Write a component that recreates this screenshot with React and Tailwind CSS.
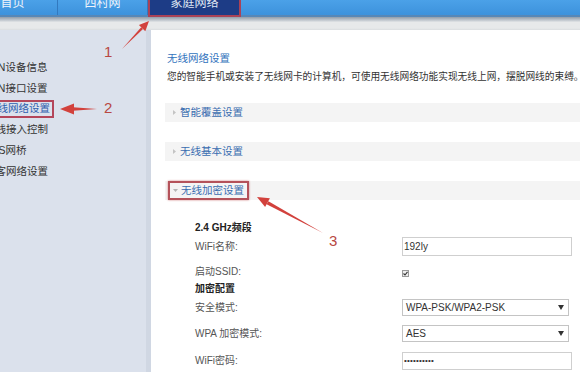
import React from 'react';

const font = { fontFamily: '"Liberation Sans", "Noto Sans CJK SC", sans-serif' };

const menu = [
    { text: 'LAN设备信息', shift: '-ml-[15px]' },
    { text: 'LAN接口设置', shift: '-ml-[15px]' },
    { text: '无线网络设置', active: true },
    { text: '无线接入控制', shift: '-ml-[15px]' },
    { text: 'WDS网桥', shift: '-ml-[19px]' },
    { text: '访客网络设置', shift: '-ml-[15px]' },
];

function Triangle({ open }) {
    return (
        <svg width="5" height="5" viewBox="0 0 5 5" className="shrink-0">
            {open ? <path d="M0 1 L5 1 L2.5 4 Z" fill="#b5b5b5" /> : <path d="M1 0 L4 2.5 L1 5 Z" fill="#c4c4c4" />}
        </svg>
    );
}

function SectionBar({ title, open, marked }) {
    return (
        <div className="h-[19px] bg-[#f4f4f4] flex items-center">
            <div
                className={
                    marked
                        ? 'ml-[3px] h-[19px] flex items-center gap-[3px] pl-[3px] pr-[3px] border-2 border-[#b4525a] shadow-[0_0_2px_#d08080]'
                        : 'ml-[7px] flex items-center gap-[3px]'
                }
            >
                <Triangle open={open} />
                <span className="text-[10.5px] leading-none text-[#3a6db0] whitespace-nowrap">{title}</span>
            </div>
        </div>
    );
}

function SelectBox({ value }) {
    return (
        <div className="w-[167px] h-[17px] border border-[#c4c4c4] bg-white flex items-center justify-between pl-[3px] pr-[4px]">
            <span className="text-[10px] leading-none text-[#333]">{value}</span>
            <svg width="6" height="5" viewBox="0 0 6 5">
                <path d="M0 0 L6 0 L3 5 Z" fill="#333" />
            </svg>
        </div>
    );
}

function Row({ label, children, className }) {
    return (
        <div className={'flex items-center ' + className}>
            <div className="w-[207px] text-[10px] leading-none text-[#555] whitespace-nowrap">{label}</div>
            {children}
        </div>
    );
}

export default function App() {
    return (
        <div className="w-[580px] h-[372px] overflow-hidden relative bg-white" style={font}>
            {/* top nav */}
            <div className="h-[17px] bg-[linear-gradient(to_bottom,#4ba1e8,#3d92dc)] border-b-2 border-[#5787b6] flex -ml-[32px]">
                <div className="w-[90px] h-[15px] border-r border-[#3279bf] flex justify-center overflow-hidden">
                    <span className="-mt-[4px] text-[12px] leading-[14px] text-[#eef4fb]">首页</span>
                </div>
                <div className="w-[90px] h-[15px] border-r border-[#3279bf] flex justify-center overflow-hidden">
                    <span className="-mt-[4px] text-[12px] leading-[14px] text-[#eef4fb]">四村网</span>
                </div>
                <div className="w-[93px] h-[17px] bg-[#1d3c86] border-2 border-t-0 border-[#a94257] flex justify-center overflow-hidden">
                    <span className="-mt-[4px] text-[12px] leading-[14px] text-[#dfe6f3]">家庭网络</span>
                </div>
            </div>
            <div className="h-[13px] bg-[linear-gradient(to_bottom,#919daa,#cdd2d7_30%,#e7e9ea_40%,#e7e9ea_85%,#dadddf)]" />

            <div className="flex h-[342px]">
                {/* sidebar */}
                <div className="w-[151px] shrink-0 bg-[#dbe1ec] border-r-[5px] border-[#d0d7e3] overflow-hidden pt-[27px]">
                    {menu.map((m) => (
                        <div key={m.text} className="h-[20.7px] flex items-center">
                            {m.active ? (
                                <span className="-ml-[17px] h-[18px] flex items-center pl-[2px] pr-[2px] border-2 border-[#b4465a] text-[10.5px] leading-none text-[#2f5fae] whitespace-nowrap">
                                    {m.text}
                                </span>
                            ) : (
                                <span className={m.shift + ' text-[10.5px] leading-none text-[#333] whitespace-nowrap'}>{m.text}</span>
                            )}
                        </div>
                    ))}
                </div>

                {/* content */}
                <div className="flex-1 pl-[14px] pt-[22px] overflow-hidden">
                    <div className="pl-[2px] h-[14px] flex items-center text-[10.5px] text-[#3273bd] whitespace-nowrap">无线网络设置</div>
                    <div className="pl-[2px] mt-[4px] h-[14px] flex items-center text-[9.7px] text-[#333] whitespace-nowrap">
                        您的智能手机或安装了无线网卡的计算机，可使用无线网络功能实现无线上网，摆脱网线的束缚。
                    </div>

                    <div className="mt-[19px]">
                        <SectionBar title="智能覆盖设置" />
                    </div>
                    <div className="mt-[20px]">
                        <SectionBar title="无线基本设置" />
                    </div>
                    <div className="mt-[20px]">
                        <SectionBar title="无线加密设置" open marked />
                    </div>

                    <div className="pl-[30px]">
                        <div className="mt-[20px] h-[14px] flex items-center text-[10px] font-bold text-[#222]">2.4 GHz频段</div>
                        <Row label="WiFi名称:" className="mt-[3px] h-[19px]">
                            <div className="w-[170px] h-[19px] border border-[#cfcfcf] bg-white flex items-center pl-[1px] text-[10px] text-[#333]">
                                192ly
                            </div>
                        </Row>
                        <Row label="启动SSID:" className="mt-[9px] h-[14px]">
                            <div className="w-[7px] h-[7px] mt-[2px] border border-[#9a9a9a] bg-[#eee] flex items-center justify-center">
                                <svg width="5" height="5" viewBox="0 0 5 5">
                                    <path d="M0.5 2.5 L2 4 L4.5 0.8" stroke="#333" strokeWidth="1.1" fill="none" />
                                </svg>
                            </div>
                        </Row>
                        <div className="mt-[2px] h-[14px] flex items-center text-[10px] font-bold text-[#222]">加密配置</div>
                        <Row label="安全模式:" className="mt-[4px] h-[17px]">
                            <SelectBox value="WPA-PSK/WPA2-PSK" />
                        </Row>
                        <Row label="WPA 加密模式:" className="mt-[9px] h-[17px]">
                            <SelectBox value="AES" />
                        </Row>
                        <Row label="WiFi密码:" className="mt-[10px] h-[18px]">
                            <div className="w-[170px] h-[18px] border border-[#cfcfcf] bg-white flex items-center pl-[1px] text-[8px] tracking-[0.2px] text-[#333]">
                                ••••••••••
                            </div>
                        </Row>
                    </div>
                </div>
            </div>

            {/* annotation arrows */}
            <svg className="absolute left-0 top-0 pointer-events-none" width="580" height="372" viewBox="0 0 580 372">
                <polygon points="149,21 145.3,31.3 138.9,25.1" fill="#d2413c" />
                <polygon points="143,29.1 141.2,27.3 122,49" fill="#d2413c" />
                <polygon points="60,109 74,103.5 74,114.5" fill="#d2413c" />
                <polygon points="73,107.3 97,109 73,110.7" fill="#d2413c" />
                <polygon points="257,197 269.9,198.3 265.1,207.1" fill="#d2413c" />
                <polygon points="268.4,201.2 266.6,204.2 323,233" fill="#d2413c" />
            </svg>
            <span className="absolute left-[104px] top-[44px] text-[15px] leading-none text-[#b84843]">1</span>
            <span className="absolute left-[104px] top-[100px] text-[15px] leading-none text-[#b84843]">2</span>
            <span className="absolute left-[329px] top-[233px] text-[15px] leading-none text-[#b84843]">3</span>
        </div>
    );
}
